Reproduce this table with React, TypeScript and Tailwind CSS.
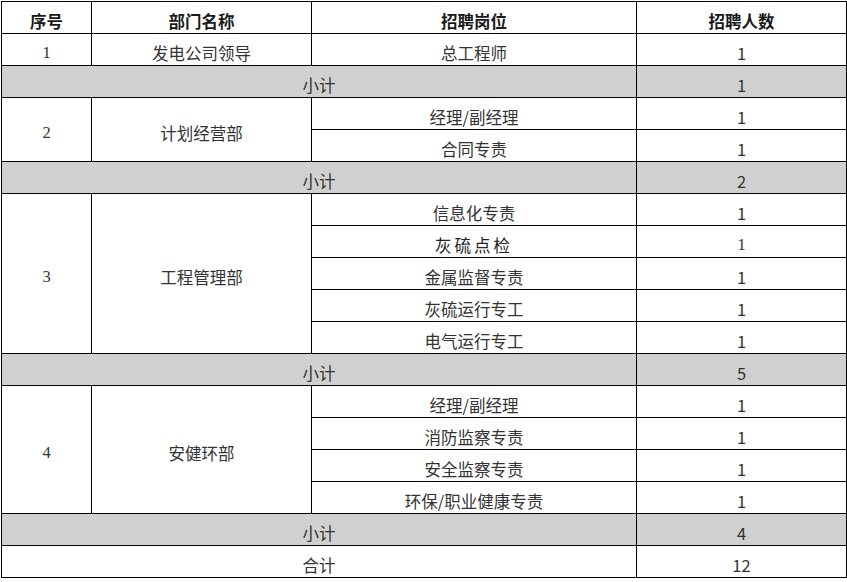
import React from 'react';

type Dept = { no: string; name: string; jobs: { title: string; count: string; serif?: boolean }[]; subtotal: string };

const DEPTS: Dept[] = [
  { no: '1', name: '发电公司领导', jobs: [{ title: '总工程师', count: '1' }], subtotal: '1' },
  {
    no: '2',
    name: '计划经营部',
    jobs: [
      { title: '经理/副经理', count: '1' },
      { title: '合同专责', count: '1' },
    ],
    subtotal: '2',
  },
  {
    no: '3',
    name: '工程管理部',
    jobs: [
      { title: '信息化专责', count: '1' },
      { title: '灰硫点检', count: '1', serif: true },
      { title: '金属监督专责', count: '1' },
      { title: '灰硫运行专工', count: '1' },
      { title: '电气运行专工', count: '1' },
    ],
    subtotal: '5',
  },
  {
    no: '4',
    name: '安健环部',
    jobs: [
      { title: '经理/副经理', count: '1' },
      { title: '消防监察专责', count: '1' },
      { title: '安全监察专责', count: '1' },
      { title: '环保/职业健康专责', count: '1' },
    ],
    subtotal: '4',
  },
];

const cell = 'border border-black h-8 pt-[7px] pb-0 px-1 text-center align-middle leading-[24px]';
const serif = "font-['Liberation_Serif','Noto_Sans_CJK_SC',serif]";

export default function App() {
  return (
    <div className="bg-white w-[847px] h-[582px] pt-px pl-px font-['Noto_Sans_CJK_SC','Liberation_Sans',sans-serif] text-[16.5px] text-[#333]">
      <table className="border-collapse table-fixed w-[845px]">
        <colgroup>
          <col className="w-[90px]" />
          <col className="w-[220px]" />
          <col className="w-[325px]" />
          <col className="w-[210px]" />
        </colgroup>
        <thead>
          <tr className="font-bold text-[#1a1a1a]">
            <td className={cell}>序号</td>
            <td className={cell}>部门名称</td>
            <td className={cell}>招聘岗位</td>
            <td className={cell}>招聘人数</td>
          </tr>
        </thead>
        <tbody>
          {DEPTS.map((d) => (
            <React.Fragment key={d.no}>
              {d.jobs.map((j, i) => (
                <tr key={j.title + i}>
                  {i === 0 && (
                    <>
                      <td rowSpan={d.jobs.length} className={`${cell} ${serif}`}>
                        {d.no}
                      </td>
                      <td rowSpan={d.jobs.length} className={cell}>
                        {d.name}
                      </td>
                    </>
                  )}
                  <td className={`${cell} ${j.serif ? 'tracking-[3px] text-[#222]' : ''}`}>{j.title}</td>
                  <td className={`${cell} ${j.serif ? serif : ''}`}>{j.count}</td>
                </tr>
              ))}
              <tr className="bg-[#d0d0d0]">
                <td colSpan={3} className={cell}>
                  小计
                </td>
                <td className={cell}>{d.subtotal}</td>
              </tr>
            </React.Fragment>
          ))}
          <tr>
            <td colSpan={3} className={cell}>
              合计
            </td>
            <td className={cell}>12</td>
          </tr>
        </tbody>
      </table>
    </div>
  );
}
